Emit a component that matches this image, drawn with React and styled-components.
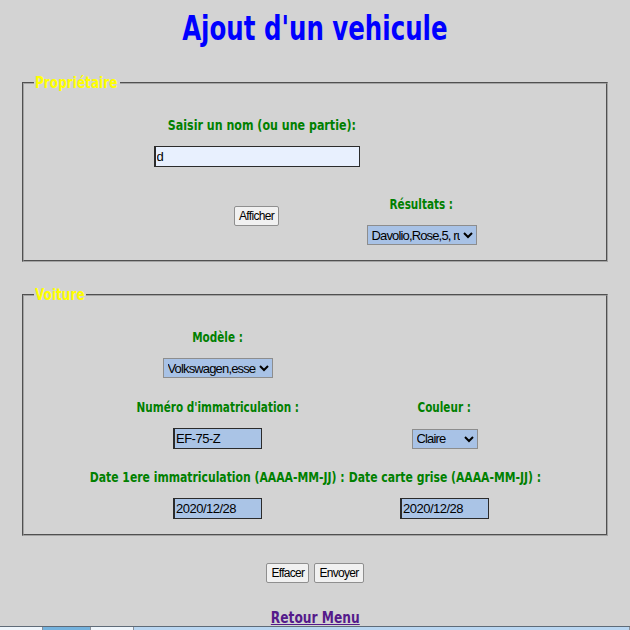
import styled, { createGlobalStyle } from "styled-components";

const GlobalStyle = createGlobalStyle`
  html, body {
    margin: 0;
    padding: 0;
    background-color: #d3d3d3;
  }
  body {
    width: 630px;
    height: 630px;
    overflow: hidden;
  }
`;

const Page = styled.div`
  display: flex;
  flex-direction: column;
  align-items: center;
  font-family: "DejaVu Sans Condensed", "DejaVu Sans", sans-serif;
  font-stretch: condensed;
`;

const Title = styled.h1`
  margin: 6px 0 0;
  height: 44px;
  color: #0000ff;
  font-size: 34px;
  font-weight: bold;
  line-height: 44px;
  white-space: nowrap;
  transform: scaleX(0.8);
`;

const Fieldset = styled.fieldset`
  box-sizing: border-box;
  width: 586px;
  margin: ${(p) => p.$top}px 0 0;
  padding: 0;
  border: 2px groove #a4a4a4;
  height: ${(p) => p.$height}px;
`;

const Legend = styled.legend`
  margin-left: 10px;
  padding: 0 1px;
  width: ${(p) => p.$width}px;
  color: #ffff00;
  font-size: 16px;
  font-weight: bold;
  line-height: 18px;
  white-space: nowrap;

  span {
    display: inline-block;
    transform: scaleX(0.84);
    transform-origin: left center;
  }
`;

const Grid = styled.div`
  display: grid;
  grid-template-columns: ${(p) => p.$cols};
  justify-content: center;
  justify-items: center;
  align-items: center;
`;

const Label = styled.div`
  display: inline-block;
  color: #008000;
  font-size: 14px;
  font-weight: bold;
  line-height: 18px;
  white-space: nowrap;
  margin-top: ${(p) => p.$top || 0}px;
  margin-left: ${(p) => p.$shift || 0}px;
  transform: scaleX(${(p) => p.$scale || 0.83});
`;

const TextInput = styled.input`
  box-sizing: border-box;
  width: ${(p) => p.$width}px;
  height: 21px;
  margin-top: ${(p) => p.$top || 0}px;
  padding: 0 1px;
  border: 1px solid #2b2b2b;
  border-width: 1px 1px 1px 2px;
  background-color: ${(p) => (p.$light ? "#e8f0fe" : "#aac4e6")};
  color: #000;
  font-family: "Liberation Sans", sans-serif;
  font-size: 13px;
  letter-spacing: -0.5px;
  outline: none;
`;

const Select = styled.select`
  box-sizing: border-box;
  width: ${(p) => p.$width}px;
  height: 20px;
  margin-top: ${(p) => p.$top || 0}px;
  padding: 0;
  border: 1px solid #8d8d8d;
  background-color: #a8c2e6;
  color: #000;
  font-family: "Liberation Sans", sans-serif;
  font-size: 13px;
  letter-spacing: -0.85px;
`;

const Button = styled.button`
  box-sizing: border-box;
  height: 20px;
  margin-top: ${(p) => p.$top || 0}px;
  padding: 0 4px;
  border: 1px solid #8f8f8f;
  border-radius: 2px;
  background-color: #f1f1f1;
  color: #000;
  font-family: "Liberation Sans", sans-serif;
  font-size: 12px;
  letter-spacing: -0.7px;
`;

const Cell = styled.div`
  display: flex;
  flex-direction: column;
  align-items: center;
`;

const Actions = styled.div`
  display: flex;
  gap: 5px;
  margin-top: 27px;
`;

const BackLink = styled.a`
  display: inline-block;
  margin-top: 25px;
  color: #551a8b;
  font-size: 16px;
  font-weight: bold;
  line-height: 20px;
  text-decoration: underline;
  transform: scaleX(0.85);
`;

const Taskbar = styled.div`
  display: flex;
  width: 630px;
  height: 5px;
  margin-top: -2px;
  border-top: 1px solid #5f6b78;
`;

const TaskItem = styled.div`
  box-sizing: border-box;
  width: ${(p) => (p.$grow ? "auto" : `${p.$width}px`)};
  flex: ${(p) => (p.$grow ? 1 : "none")};
  background-color: ${(p) => p.$bg};
  border-right: 1px solid #8a9099;
`;

function App() {
  return (
    <Page>
      <GlobalStyle />
      <Title>Ajout d'un vehicule</Title>

      <Fieldset $top={24} $height={188}>
        <Legend $width={84}>
          <span>Propriétaire</span>
        </Legend>
        <Grid $cols="213px 117px">
          <Label $top={24} $scale={0.88} $shift={11}>
            Saisir un nom (ou une partie):
          </Label>
          <div />
          <TextInput $width={206} $top={12} $light defaultValue="d" />
          <div />
          <Cell>
            <Button $top={20}>Afficher</Button>
          </Cell>
          <Cell>
            <Label $top={28}>Résultats :</Label>
            <Select $width={110} $top={12}>
              <option>Davolio,Rose,5, rue des Lilas</option>
            </Select>
          </Cell>
        </Grid>
      </Fieldset>

      <Fieldset $top={24} $height={250}>
        <Legend $width={50}>
          <span>Voiture</span>
        </Legend>
        <Grid $cols="259px 195px">
          <Label $top={24}>Modèle :</Label>
          <div />
          <Select $width={110} $top={12}>
            <option>Volkswagen,essence</option>
          </Select>
          <div />
          <Label $top={20}>Numéro d'immatriculation :</Label>
          <Label $top={20}>Couleur :</Label>
          <TextInput $width={89} $top={12} defaultValue="EF-75-Z" />
          <Select $width={66} $top={12}>
            <option>Claire</option>
          </Select>
          <Label $top={19} $scale={0.86}>Date 1ere immatriculation (AAAA-MM-JJ) :</Label>
          <Label $top={19} $scale={0.86}>Date carte grise (AAAA-MM-JJ) :</Label>
          <TextInput $width={89} $top={12} defaultValue="2020/12/28" />
          <TextInput $width={89} $top={12} defaultValue="2020/12/28" />
        </Grid>
      </Fieldset>

      <Actions>
        <Button>Effacer</Button>
        <Button>Envoyer</Button>
      </Actions>

      <BackLink href="#">Retour Menu</BackLink>

      <Taskbar>
        <TaskItem $width={43} $bg="#eef5fb" />
        <TaskItem $width={48} $bg="#74b2dd" />
        <TaskItem $width={43} $bg="#eef5fb" />
        <TaskItem $grow $bg="#b9d6f1" />
      </Taskbar>
    </Page>
  );
}

export default App;
